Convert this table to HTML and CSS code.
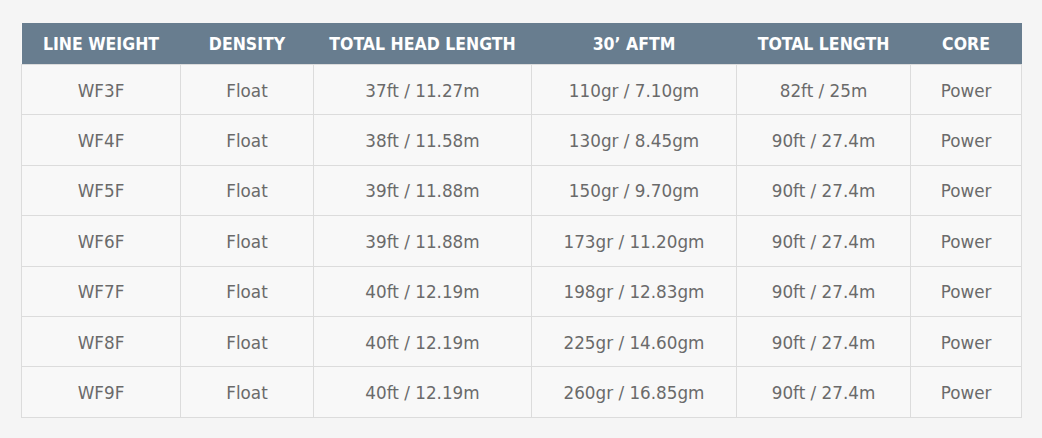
FILE: index.html
```html
<!DOCTYPE html>
<html>
<head>
<meta charset="utf-8">
<link rel="stylesheet" href="styles.css">
</head>
<body>
<table class="spec">
  <colgroup>
    <col class="c1"><col class="c2"><col class="c3"><col class="c4"><col class="c5"><col class="c6">
  </colgroup>
  <thead>
    <tr><th>LINE WEIGHT</th><th>DENSITY</th><th>TOTAL HEAD LENGTH</th><th>30’ AFTM</th><th>TOTAL LENGTH</th><th>CORE</th></tr>
  </thead>
  <tbody>
    <tr><td>WF3F</td><td>Float</td><td>37ft / 11.27m</td><td>110gr / 7.10gm</td><td>82ft / 25m</td><td>Power</td></tr>
    <tr><td>WF4F</td><td>Float</td><td>38ft / 11.58m</td><td>130gr / 8.45gm</td><td>90ft / 27.4m</td><td>Power</td></tr>
    <tr><td>WF5F</td><td>Float</td><td>39ft / 11.88m</td><td>150gr / 9.70gm</td><td>90ft / 27.4m</td><td>Power</td></tr>
    <tr><td>WF6F</td><td>Float</td><td>39ft / 11.88m</td><td>173gr / 11.20gm</td><td>90ft / 27.4m</td><td>Power</td></tr>
    <tr><td>WF7F</td><td>Float</td><td>40ft / 12.19m</td><td>198gr / 12.83gm</td><td>90ft / 27.4m</td><td>Power</td></tr>
    <tr><td>WF8F</td><td>Float</td><td>40ft / 12.19m</td><td>225gr / 14.60gm</td><td>90ft / 27.4m</td><td>Power</td></tr>
    <tr><td>WF9F</td><td>Float</td><td>40ft / 12.19m</td><td>260gr / 16.85gm</td><td>90ft / 27.4m</td><td>Power</td></tr>
  </tbody>
</table>
</body>
</html>
```
FILE: styles.css
```css
html, body {
  margin: 0;
  background: #f5f5f5;
}
body {
  padding: 23px 21px 0 21px;
}
.spec {
  border-collapse: collapse;
  table-layout: fixed;
  width: 1000px;
  background: #f8f8f8;
  font-family: "DejaVu Sans", Verdana, sans-serif;
}
.c1 { width: 159px; }
.c2 { width: 133px; }
.c3 { width: 218px; }
.c4 { width: 205px; }
.c5 { width: 174px; }
.c6 { width: 111px; }
.spec th {
  background: #687d8f;
  color: #ffffff;
  font-family: "DejaVu Sans", sans-serif;
  font-stretch: condensed;
  font-weight: bold;
  font-size: 17.5px;
  height: 41px;
  padding: 0;
  text-align: center;
}
.spec td {
  border: 1px solid #dcdcdc;
  color: #6a6a6a;
  font-size: 16.8px;
  height: 47.4px;
  padding: 2px 0 0 0;
  text-align: center;
}
```
